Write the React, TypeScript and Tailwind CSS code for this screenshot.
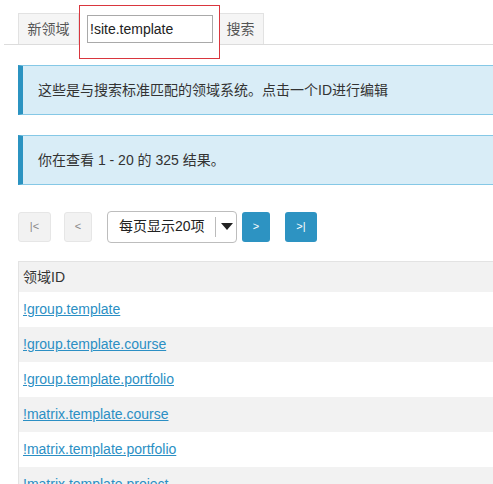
import React from "react";

const rows = [
  "!group.template",
  "!group.template.course",
  "!group.template.portfolio",
  "!matrix.template.course",
  "!matrix.template.portfolio",
  "!matrix.template.project",
  "!site.template",
];

export default function App() {
  return (
    <div
      className="min-h-screen w-full overflow-hidden bg-white text-[14px] text-[#333]"
      style={{ fontFamily: '"Liberation Sans", Arial, "Noto Sans CJK SC", sans-serif' }}
    >
      <div className="w-[700px]">
        {/* tabs */}
        <div className="ml-1 flex h-[45px] items-start border-b border-[#dcdcdc] pl-[14px]">
          <div className="mt-[13px] flex h-[31px] w-[61px] items-center justify-center border border-b-0 border-[#e2e2e2] bg-[#f5f5f5] text-[#555]">
            新领域
          </div>
          <div className="relative z-10 mt-[5px] h-[54px] w-[141px] border border-[#d9363e] bg-white pl-[7px] pt-[9px]">
            <div className="flex h-[28px] w-[126px] items-center border border-[#a9a9a9] pl-[2px] text-[#222]">
              !site.template
            </div>
          </div>
          <div className="mt-[13px] -ml-[3px] flex h-[31px] w-[47px] items-center justify-center border border-b-0 border-[#e2e2e2] bg-[#f5f5f5] text-[#555]">
            搜索
          </div>
        </div>

        {/* alerts */}
        <div className="ml-[18px] mt-[20px] flex h-[50px] items-center border-y border-l-[5px] border-y-[#85c8e6] border-l-[#2b93c1] bg-[#d9edf7] pl-[15px]">
          这些是与搜索标准匹配的领域系统。点击一个ID进行编辑
        </div>
        <div className="ml-[18px] mt-[20px] flex h-[50px] items-center border-y border-l-[5px] border-y-[#85c8e6] border-l-[#2b93c1] bg-[#d9edf7] pl-[15px]">
          你在查看 1 - 20 的 325 结果。
        </div>

        {/* pager */}
        <div className="ml-[18px] mt-[26px] flex h-[31px] items-center">
          <div className="flex h-[30px] w-[33px] items-center justify-center rounded-[3px] border border-[#e6e6e6] bg-[#f2f2f2] text-[11px] text-[#888]">
            |&lt;
          </div>
          <div className="ml-[13px] flex h-[30px] w-[28px] items-center justify-center rounded-[3px] border border-[#e6e6e6] bg-[#f2f2f2] text-[11px] text-[#888]">
            &lt;
          </div>
          <div className="ml-[15px] flex h-[32px] w-[130px] items-center rounded-[4px] border border-[#bdbdbd] bg-white">
            <span className="ml-[11px] w-[96px] text-[#222]">每页显示20项</span>
            <span className="h-[20px] w-px bg-[#bbb]" />
            <svg width="12" height="8" viewBox="0 0 12 8" className="ml-[5px]">
              <path d="M0 0 H12 L6 7 Z" fill="#222" />
            </svg>
          </div>
          <div className="ml-[5px] flex h-[30px] w-[28px] items-center justify-center rounded-[3px] bg-[#2d93c2] text-[11px] text-white">
            &gt;
          </div>
          <div className="ml-[15px] flex h-[30px] w-[32px] items-center justify-center rounded-[3px] bg-[#2d93c2] text-[11px] text-white">
            &gt;|
          </div>
        </div>

        {/* table */}
        <div className="ml-[18px] mt-[19px] border-l border-t border-[#e3e3e3]">
          <div className="flex h-[30px] items-center bg-[#f2f2f2] pl-[4px] text-[#333]">领域ID</div>
          {rows.map((r, i) => (
            <div
              key={r}
              className={`flex h-[35px] items-center pl-[4px] ${i % 2 === 1 ? "bg-[#f2f2f2]" : "bg-white"}`}
            >
              <a href="#" className="text-[#2b8fc4] underline">
                {r}
              </a>
            </div>
          ))}
        </div>
      </div>
    </div>
  );
}
